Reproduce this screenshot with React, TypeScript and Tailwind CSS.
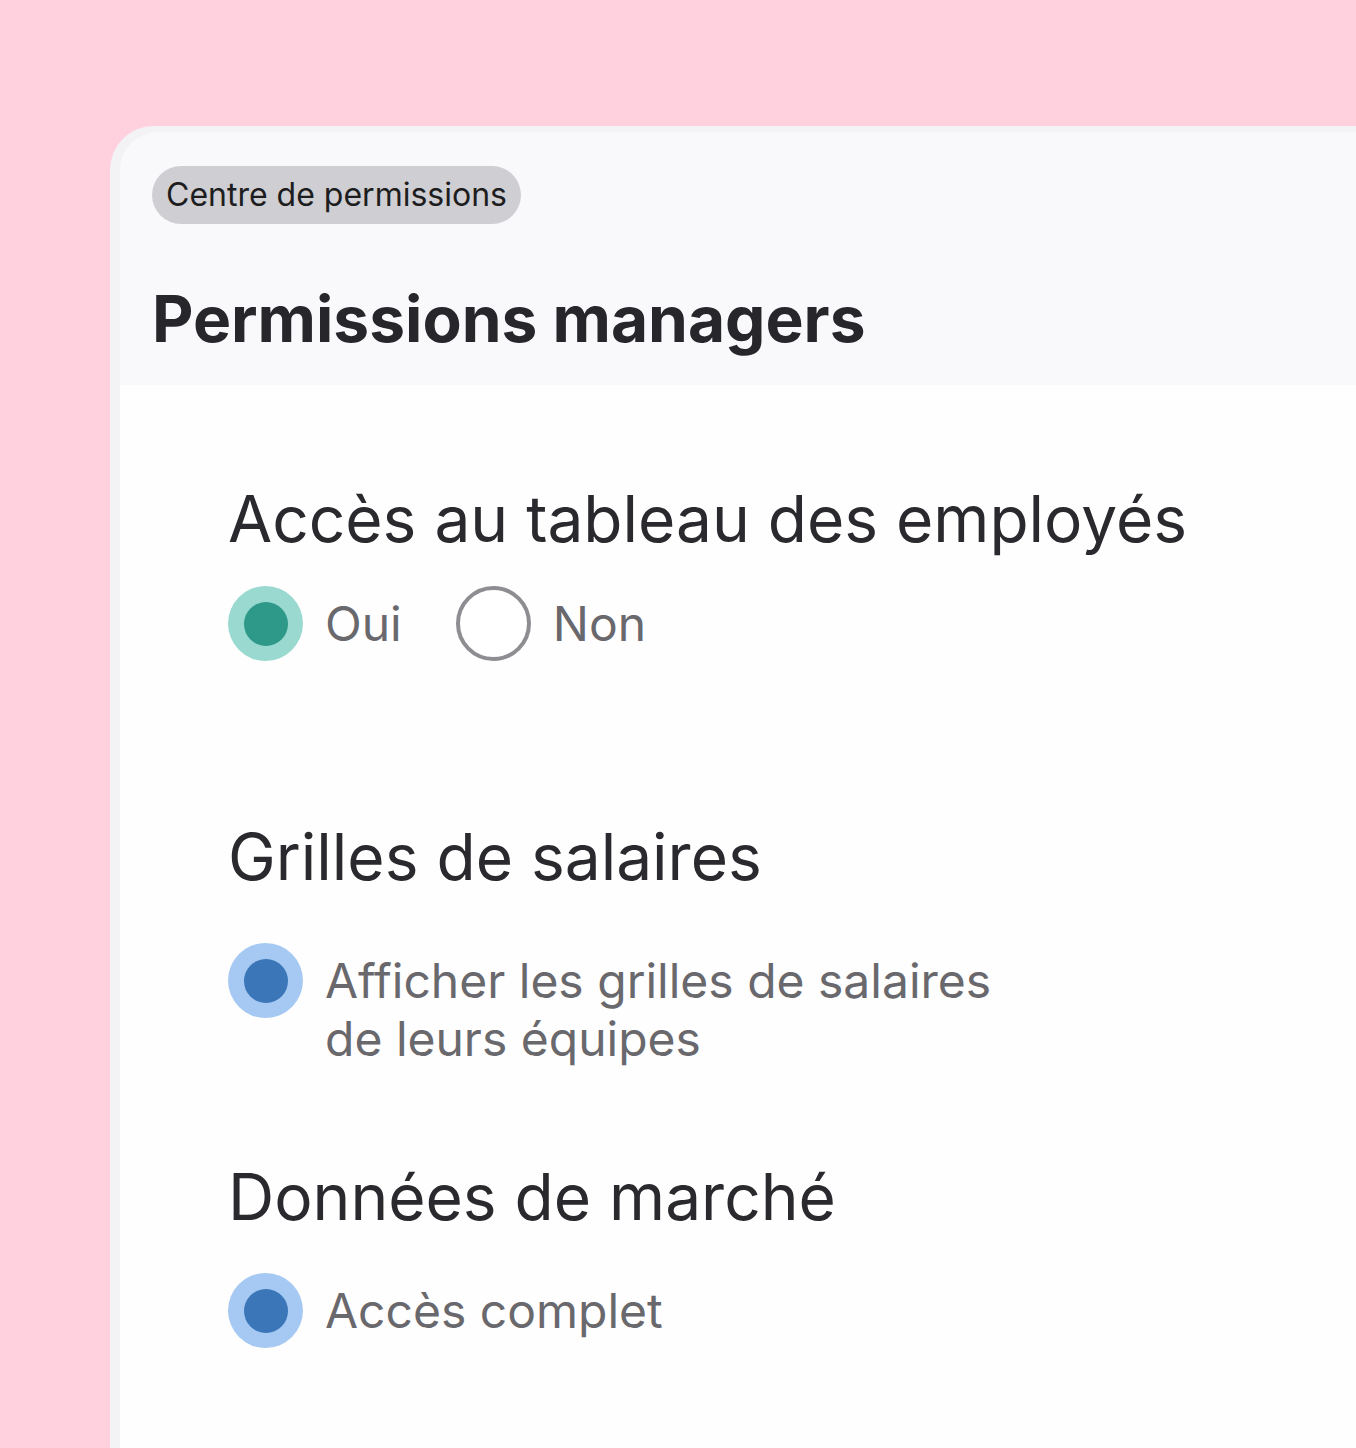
const font = { fontFamily: "Inter, 'Noto Sans', sans-serif" };

function Radio({ tone, checked }: { tone: "teal" | "blue" | "off"; checked?: boolean }) {
  if (!checked) {
    return <span className="block w-[75px] h-[75px] shrink-0 rounded-full border-[4px] border-[#8e8d91] bg-white" />;
  }
  return (
    <span
      className={
        "flex w-[75px] h-[75px] shrink-0 items-center justify-center rounded-full " +
        (tone === "teal" ? "bg-[#9ad9cf]" : "bg-[#a5c9f2]")
      }
    >
      <span className={"block w-[44px] h-[44px] rounded-full " + (tone === "teal" ? "bg-[#2e9988]" : "bg-[#3a76b8]")} />
    </span>
  );
}

export default function App() {
  return (
    <div className="min-h-[1448px] bg-[#ffd0dd] pt-[126px] pl-[110px] overflow-hidden" style={font}>
      <div className="rounded-tl-[44px] bg-[#f3f3f6] pl-[10px] pt-[6px] h-[1322px]">
        {/* header */}
        <div className="rounded-tl-[38px] bg-[#f9f9fb] pl-[32px] pt-[34px] h-[253px]">
          <span className="inline-flex h-[58px] items-center rounded-full bg-[#cfced2] px-[14px] text-[32px] text-[#1d1d20]">
            Centre de permissions
          </span>
          <h1 className="mt-[63px] text-[64px] font-bold leading-none text-[#27272b]">
            Permissions managers
          </h1>
        </div>

        {/* body */}
        <div className="bg-[#fefefe] h-full pl-[108px] pt-[98px]">
          <section>
            <h2 className="text-[64px] leading-[72px] text-[#2a2a2e]">Accès au tableau des employés</h2>
            <div className="mt-[31px] flex items-center gap-[22px]">
              <Radio tone="teal" checked />
              <span className="text-[48px] leading-[58px] text-[#69686d]">Oui</span>
              <span className="ml-[32px]"><Radio tone="off" /></span>
              <span className="text-[48px] leading-[58px] text-[#69686d]">Non</span>
            </div>
          </section>

          <section className="mt-[160px]">
            <h2 className="text-[64px] leading-[72px] text-[#2a2a2e]">Grilles de salaires</h2>
            <div className="mt-[50px] flex items-start gap-[22px]">
              <Radio tone="blue" checked />
              <span className="pt-[9px] text-[48px] leading-[58px] text-[#69686d]">
                Afficher les grilles de salaires
                <br />
                de leurs équipes
              </span>
            </div>
          </section>

          <section className="mt-[93px]">
            <h2 className="text-[64px] leading-[72px] text-[#2a2a2e]">Données de marché</h2>
            <div className="mt-[40px] flex items-center gap-[22px]">
              <Radio tone="blue" checked />
              <span className="text-[48px] leading-[58px] text-[#69686d]">Accès complet</span>
            </div>
          </section>
        </div>
      </div>
    </div>
  );
}
